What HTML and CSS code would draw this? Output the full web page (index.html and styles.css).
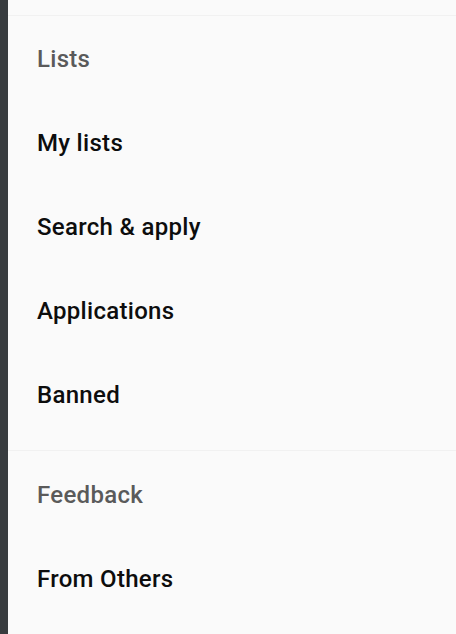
FILE: index.html
```html
<!DOCTYPE html>
<html lang="en">
<head>
<meta charset="utf-8">
<title>Menu</title>
<link rel="stylesheet" href="styles.css">
</head>
<body>
<div class="screen">
  <div class="edge"></div>
  <nav class="drawer">
    <div class="drawer-top"></div>
    <section class="group">
      <div class="group-title">Lists</div>
      <a class="item">My lists</a>
      <a class="item">Search &amp; apply</a>
      <a class="item">Applications</a>
      <a class="item">Banned</a>
    </section>
    <section class="group">
      <div class="group-title">Feedback</div>
      <a class="item">From Others</a>
    </section>
  </nav>
</div>
</body>
</html>
```

FILE: styles.css
```css
html, body {
  margin: 0;
  padding: 0;
  height: 100%;
  overflow: hidden;
}

body {
  background: #fafafa;
  font-family: Roboto, "Noto Sans", sans-serif;
}

.screen {
  display: flex;
  height: 100%;
}

.edge {
  flex: 0 0 8px;
  background: #383c3f;
}

.drawer {
  flex: 1;
  display: flex;
  flex-direction: column;
  background: #fafafa;
}

.drawer-top {
  height: 15px;
}

.group {
  border-top: 1px solid #f1f1f1;
  padding: 1px 0 13px;
  display: flex;
  flex-direction: column;
}

.group + .group {
  padding-top: 2px;
}

.group-title,
.item {
  height: 84px;
  display: flex;
  align-items: center;
  padding-left: 29px;
  font-size: 24px;
  font-weight: 500;
  letter-spacing: 0.3px;
}

.group-title {
  color: #5a5a5a;
}

.item {
  color: #0d0d0d;
  text-decoration: none;
}
```
